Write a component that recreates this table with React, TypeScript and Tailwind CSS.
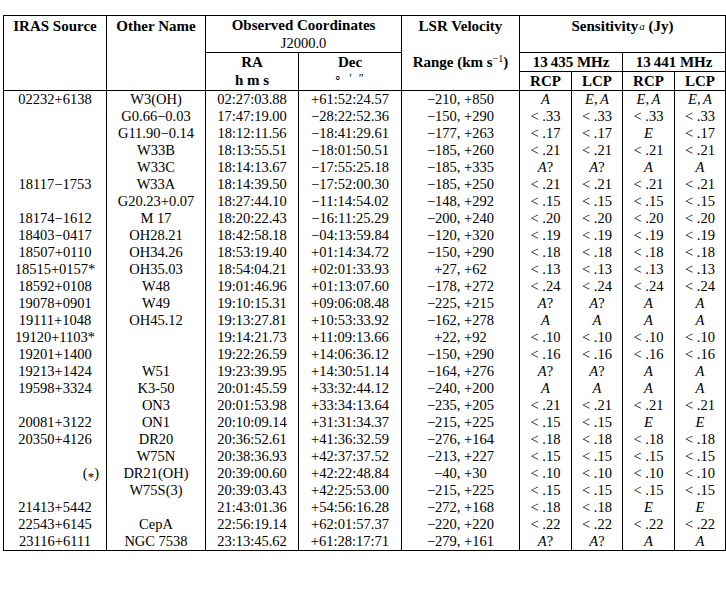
import React from 'react';

// ══════════════════════════════════════════════════════════════
// Data
// ══════════════════════════════════════════════════════════════

type Row = [string, string, string, string, string, string, string, string, string];

const L21 = '<.21';
const rows: Row[] = [
  ['02232+6138', 'W3(OH)', '02:27:03.88', '+61:52:24.57', '−210, +850', 'A', 'E,A', 'E,A', 'E,A'],
  ['', 'G0.66−0.03', '17:47:19.00', '−28:22:52.36', '−150, +290', '<.33', '<.33', '<.33', '<.33'],
  ['', 'G11.90−0.14', '18:12:11.56', '−18:41:29.61', '−177, +263', '<.17', '<.17', 'E', '<.17'],
  ['', 'W33B', '18:13:55.51', '−18:01:50.51', '−185, +260', L21, L21, L21, L21],
  ['', 'W33C', '18:14:13.67', '−17:55:25.18', '−185, +335', 'A?', 'A?', 'A', 'A'],
  ['18117−1753', 'W33A', '18:14:39.50', '−17:52:00.30', '−185, +250', L21, L21, L21, L21],
  ['', 'G20.23+0.07', '18:27:44.10', '−11:14:54.02', '−148, +292', '<.15', '<.15', '<.15', '<.15'],
  ['18174−1612', 'M 17', '18:20:22.43', '−16:11:25.29', '−200, +240', '<.20', '<.20', '<.20', '<.20'],
  ['18403−0417', 'OH28.21', '18:42:58.18', '−04:13:59.84', '−120, +320', '<.19', '<.19', '<.19', '<.19'],
  ['18507+0110', 'OH34.26', '18:53:19.40', '+01:14:34.72', '−150, +290', '<.18', '<.18', '<.18', '<.18'],
  ['18515+0157*', 'OH35.03', '18:54:04.21', '+02:01:33.93', '+27, +62', '<.13', '<.13', '<.13', '<.13'],
  ['18592+0108', 'W48', '19:01:46.96', '+01:13:07.60', '−178, +272', '<.24', '<.24', '<.24', '<.24'],
  ['19078+0901', 'W49', '19:10:15.31', '+09:06:08.48', '−225, +215', 'A?', 'A?', 'A', 'A'],
  ['19111+1048', 'OH45.12', '19:13:27.81', '+10:53:33.92', '−162, +278', 'A', 'A', 'A', 'A'],
  ['19120+1103*', '', '19:14:21.73', '+11:09:13.66', '+22, +92', '<.10', '<.10', '<.10', '<.10'],
  ['19201+1400', '', '19:22:26.59', '+14:06:36.12', '−150, +290', '<.16', '<.16', '<.16', '<.16'],
  ['19213+1424', 'W51', '19:23:39.95', '+14:30:51.14', '−164, +276', 'A?', 'A?', 'A', 'A'],
  ['19598+3324', 'K3-50', '20:01:45.59', '+33:32:44.12', '−240, +200', 'A', 'A', 'A', 'A'],
  ['', 'ON3', '20:01:53.98', '+33:34:13.64', '−235, +205', L21, L21, L21, L21],
  ['20081+3122', 'ON1', '20:10:09.14', '+31:31:34.37', '−215, +225', '<.15', '<.15', 'E', 'E'],
  ['20350+4126', 'DR20', '20:36:52.61', '+41:36:32.59', '−276, +164', '<.18', '<.18', '<.18', '<.18'],
  ['', 'W75N', '20:38:36.93', '+42:37:37.52', '−213, +227', '<.15', '<.15', '<.15', '<.15'],
  ['(*)', 'DR21(OH)', '20:39:00.60', '+42:22:48.84', '−40, +30', '<.10', '<.10', '<.10', '<.10'],
  ['', 'W75S(3)', '20:39:03.43', '+42:25:53.00', '−215, +225', '<.15', '<.15', '<.15', '<.15'],
  ['21413+5442', '', '21:43:01.36', '+54:56:16.28', '−272, +168', '<.18', '<.18', 'E', 'E'],
  ['22543+6145', 'CepA', '22:56:19.14', '+62:01:57.37', '−220, +220', '<.22', '<.22', '<.22', '<.22'],
  ['23116+6111', 'NGC 7538', '23:13:45.62', '+61:28:17:71', '−279, +161', 'A?', 'A?', 'A', 'A'],
];

// ══════════════════════════════════════════════════════════════
// Helpers
// ══════════════════════════════════════════════════════════════

// Sensitivity cell: italic letters, "<" with math spacing
function Sens({ v }: { v: string }) {
  if (v.startsWith('<')) return <>{'<\u2005' + v.slice(1)}</>;
  if (v === 'E,A')
    return (
      <>
        <i>E</i>,{'\u2006'}<i>A</i>
      </>
    );
  if (v === 'A?')
    return (
      <>
        <i>A</i>?
      </>
    );
  return <i>{v}</i>;
}

// IRAS name; the lone "(*)" sits flush right with a math-style star
function Iras({ v }: { v: string }) {
  if (v === '(*)')
    return (
      <>
        (<span className="relative top-[3px] text-[13px]">*</span>)
      </>
    );
  return <>{v}</>;
}

const th = 'border-x border-black p-0 font-bold text-[15px] leading-[17px] text-center whitespace-nowrap';
const td = 'border-x border-black p-0 text-center whitespace-nowrap';

// ══════════════════════════════════════════════════════════════
// Component
// ══════════════════════════════════════════════════════════════

export default function App() {
  return (
    <div className="min-h-[608px] w-[726px] bg-white pt-[15px] pl-[3px] text-black font-['Liberation_Serif',serif]">
      <table className="w-[723px] table-fixed border-collapse border border-black text-[14.5px] leading-[17px]">
        <colgroup>
          <col className="w-[103px]" />
          <col className="w-[99px]" />
          <col className="w-[93px]" />
          <col className="w-[103px]" />
          <col className="w-[118px]" />
          <col className="w-[52px]" />
          <col className="w-[51px]" />
          <col className="w-[52px]" />
          <col className="w-[51px]" />
        </colgroup>
        <thead>
          <tr className="h-[19px]">
            <th rowSpan={4} className={`${th} align-top pt-[2px]`}>IRAS Source</th>
            <th rowSpan={4} className={`${th} align-top pt-[2px]`}>Other Name</th>
            <th colSpan={2} className={`${th} align-middle`}>Observed Coordinates</th>
            <th rowSpan={2} className={`${th} align-top pt-[2px]`}>LSR Velocity</th>
            <th colSpan={4} rowSpan={2} className={`${th} align-top pt-[2px] border-b`}>
              Sensitivity<sup className="font-normal italic text-[11px] relative -top-[1px] ml-[1px]">a</sup> (Jy)
            </th>
          </tr>
          <tr className="h-[18px]">
            <td colSpan={2} className={`${td} border-b align-middle`}>J2000.0</td>
          </tr>
          <tr className="h-[19px]">
            <th className={`${th} align-middle`}>RA</th>
            <th className={`${th} align-middle`}>Dec</th>
            <th rowSpan={2} className={`${th} align-top pt-[1px]`}>
              Range (km s<sup className="font-normal text-[10px]">−1</sup>)
            </th>
            <th colSpan={2} className={`${th} border-b align-middle`}>13&#8201;435 MHz</th>
            <th colSpan={2} className={`${th} border-b align-middle`}>13&#8201;441 MHz</th>
          </tr>
          <tr className="h-[19px] border-b border-black">
            <th className={`${th} align-top`}>h m s</th>
            <td className={`${td} align-top text-[12px] leading-[12px] tracking-[2px]`}>
              ∘ ′ ″
            </td>
            <th className={`${th} align-bottom`}>RCP</th>
            <th className={`${th} align-bottom`}>LCP</th>
            <th className={`${th} align-bottom`}>RCP</th>
            <th className={`${th} align-bottom`}>LCP</th>
          </tr>
        </thead>
        <tbody>
          {rows.map((r, i) => (
            <tr key={i} className="h-[16.95px]">
              <td className={`${td} ${r[0] === '(*)' ? 'text-right pr-[7px]' : ''}`}>
                <Iras v={r[0]} />
              </td>
              <td className={td}>{r[1]}</td>
              <td className={td}>{r[2]}</td>
              <td className={td}>{r[3]}</td>
              <td className={td}>{r[4]}</td>
              {r.slice(5).map((v, j) => (
                <td key={j} className={td}>
                  <Sens v={v} />
                </td>
              ))}
            </tr>
          ))}
        </tbody>
      </table>
    </div>
  );
}
